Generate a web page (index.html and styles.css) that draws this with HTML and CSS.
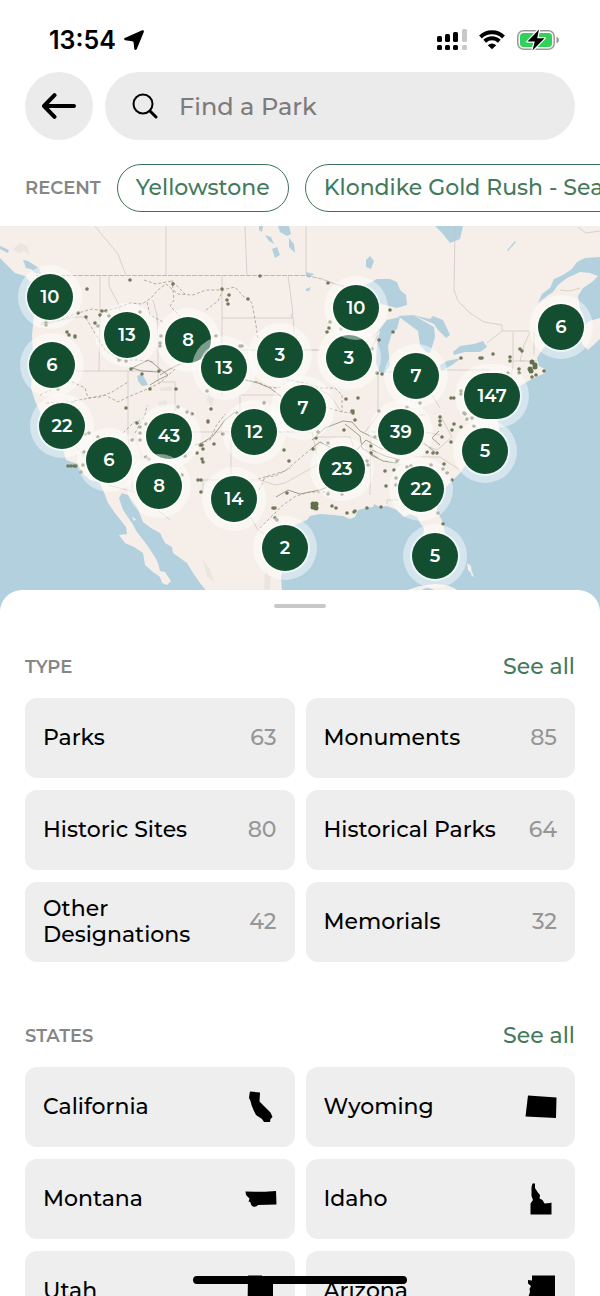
FILE: index.html
```html
<!DOCTYPE html>
<html lang="en">
<head>
<meta charset="utf-8">
<meta name="viewport" content="width=device-width, initial-scale=1">
<title>Find a Park</title>
<link rel="stylesheet" href="styles.css">
</head>
<body>
<div class="screen">
  <div class="status">
    <div class="status-side">
      <span class="time">13:54</span>
      <svg class="location" viewBox="0 0 20 20" width="20" height="20" aria-hidden="true"><path d="M18.200.3Q20.300-.3 19.800 1.900L12.800 19Q11.500 21 10.300 19L9.600 12.600Q9.400 11.400 8.200 11.200L1.200 10.200Q-.8 9 .8 7.900Z"/></svg>
    </div>
    <div class="status-side">
      <svg viewBox="0 0 30 22" width="30" height="22" aria-hidden="true">
        <g><rect x="0" y="7" width="5" height="6" rx="1.5"/><rect x="8" y="5" width="5" height="8" rx="1.5"/><rect x="16" y="3" width="5" height="10" rx="1.5"/><rect x="0" y="16" width="5" height="5" rx="1.5"/><rect x="8" y="16" width="5" height="5" rx="1.5"/><rect x="16" y="16" width="5" height="5" rx="1.5"/></g>
        <g class="signal-off"><rect x="25" y="0" width="5" height="13" rx="1.5"/><rect x="25" y="16" width="5" height="5" rx="1.5"/></g>
      </svg>
      <svg class="wifi" viewBox="0 0 26 20" width="26" height="20" aria-hidden="true">
        <path class="wifi-arc" d="M1.5 7A16.5 16.5 0 0 1 24.500 7M5.700 11.300A10.500 10.500 0 0 1 20.300 11.300"/>
        <path d="M13 19.300 8.800 15.200Q13 11.800 17.200 15.200Z"/>
      </svg>
      <svg viewBox="0 0 42 22" width="42" height="22" aria-hidden="true">
        <rect class="battery-shell" x=".8" y="1.800" width="36.400" height="18.400" rx="5.500"/>
        <rect class="battery-fill" x="3" y="4" width="32" height="14" rx="3.500"/>
        <path class="battery-tip" d="M39.500 7.500Q42 8.500 42 11T39.500 14.500Z"/>
        <path class="bolt" d="M22 .5 10.500 12.600H17.800L15.500 21.500 27.500 9.200H20.200Z"/>
      </svg>
    </div>
  </div>

  <header class="search-row">
    <button class="back" type="button" aria-label="Back">
      <svg viewBox="0 0 34 26" width="34" height="26" aria-hidden="true"><path d="M32 13H2.500M12.500 2.200 2 13 12.500 23.800"/></svg>
    </button>
    <label class="search">
      <svg viewBox="0 0 26 26" width="26" height="26" aria-hidden="true"><circle cx="11" cy="11" r="9.500"/><path class="handle-stroke" d="M18 18 24 24"/></svg>
      <input type="search" placeholder="Find a Park" aria-label="Find a Park">
    </label>
  </header>

  <nav class="recent" aria-label="Recent parks">
    <span class="label">RECENT</span>
    <a class="chip" href="#yellowstone">Yellowstone</a>
    <a class="chip" href="#klondike">Klondike Gold Rush - Seattle Unit</a>
  </nav>

  <main class="map" aria-label="Map of parks">
    <svg class="map-art" viewBox="0 226 600 390" preserveAspectRatio="none" aria-hidden="true">
      <rect class="land" x="0" y="226" width="600" height="390"/>
      <g class="relief">
        <path d="M8 243 13 249 20 243 27 246 30 255 23 251 18 254 12 248ZM160 388 172 386V391H160ZM158 402 166 400 168 405 160 408ZM208 392 214 398 212 407 207 401ZM203 560 210 570 214 582 207 576ZM265 570 271 576 270 590H264Z"/>
      </g>
      <g class="water">
        <path d="M0 258 7 265 15 273 25 276 31 283 37 295 34 316 32 335 33 355 32 375 31 388 35 401 40 412 46 428 54 442 63 450 66 460 78 464 83 474 90 480 99 482 103 490 108 503 115 513 126 527 127 534 119 535 125 543 134 547 143 553 145 565 153 572 160 577 162 583 167 585 171 581 165 572 160 571 158 563 155 557 149 548 147 545 137 532 132 523 123 510 119 498 122 493 128 495 137 507 143 522 151 528 160 533 165 543 172 547 173 553 187 563 193 573 200 583 208 593V616H0Z"/>
        <path d="M280 616 282 590 281 577 285 560 280 548 284 535 295 525 307 520 310 516 320 514 333 515 343 516 350 519 355 517 358 510 366 508 373 507 374 504 380 507 387 506 397 510 404 517 410 514 417 517 420 523 424 528 423 538 427 550 430 563 437 570 446 566 448 552 446 539 443 523 437 510 438 496 443 490 452 481 460 473 468 462 478 455 490 448 501 438 498 423 501 405 512 394 518 387 532 379 545 373 545 369 539 366 537 358 542 350 550 341 565 332 578 324 584 318 580 308 578 296 583 288 592 282 597 277 600 275V616Z"/>
        <path d="M538 303 542 294 550 288 554 279 563 275 572 269 577 262 585 258 600 257V277L590 273 580 272 567 278 558 285 553 292 547 296Z"/>
        <path d="M361 287 370 283 377 279 390 279 397 282 400 290 406 295 407 305 397 308 389 306 381 304 375 308 368 303 365 293ZM375 335 380 328 387 320 400 317 397 329 392 333 388 346 390 365 385 373 379 372 376 362 377 345 380 330ZM398 316 413 315 427 323 434 327 435 337 432 347 430 353 426 352 420 345 418 331ZM413 315 430 319 433 316 443 320 450 335 446 338 438 330 434 324ZM440 365 447 361 461 358 452 365 441 371ZM453 352 460 346 474 344 483 341 487 347 480 352 465 352 454 355ZM435 226H463L460 239 450 243 443 234ZM507 250 515 241 516 242 508 251ZM366 260 370 256 374 261 371 269 366 267ZM278 226H289L291 234 287 236 280 232ZM289 238 294 244 295 253 289 247ZM265 235 271 237 274 244 269 241ZM272 249 277 247 280 255 275 258ZM259 226H263L262 232 259 230ZM306 272 314 274 309 278 306 276ZM306 289 311 287 309 291 306 291ZM0 246 9 250 8 253 0 249ZM23 260 28 261 39 268 41 274 35 273 31 269 26 268ZM137 376 142 374 145 379 148 385 142 386 138 381Z"/>
      </g>
      <g class="land">
        <path d="M581 329 589 321 600 318V339L588 350 582 344ZM403 592Q418 585 434 584 452 584 459 592ZM467 563 471 566 472 574 468 570ZM472 571 474 577 471 575ZM132 517 136 519 134 521Z"/>
      </g>
      <path class="water" d="M422 590Q427 586 434 590Z"/>
      <g class="border">
        <path class="dashed" d="M36 275.500H306L322 279 335 284 350 288 365 285"/>
        <path d="M95 226 102 235 109 243 118 254 122 265 126 275M166 226V275M245 226 247 275M306 226V274M100 276V300L99 371M109 276V286L118 303 122 318M40 325 75 317 87 317M44 371H153M128 371V439L132 455 132 490M153 300 157 315 158 348 158 382H175M175 382V432H290M222 275V397M222 318H292L291 314M222 350H320M288 276 292 305 294 330 294 350H318M240 395V450H241M231 432V480H203V493M241 395H280L285 402M241 432H312L317 455M278 377 310 385 330 395 340 410M316 437H350L353 445 350 470M371 437 370 495M378 373V415L365 432M388 372H422V395M378 335 370 352 358 360M387 504V500H430M455 226 454 290 458 301 470 313 484 322 502 325V331H530M502 331 487 343M443 370H490M513 332V365L511 379M530 332 524 345 520 361H537M513 361H525M534 332V355M560 290 570 291 580 288M578 227 586 233 600 231M371 432H425L440 435M440 415 452 437 437 450 422 444M415 457H440L460 470M390 415H425M430 392 440 408M250 516 258 530 266 535M241 480H260L275 485 285 483 317 465M75 445 108 485 135 492 170 520"/>
      </g>
      <g class="trail">
        <path d="M42 323 60 320 75 314 92 309 105 311 120 307 130 303 142 304 151 298 158 290 166 284 178 294 193 295 206 290 222 290 235 287 243 296 252 303 256 325 258 340M144 280 156 284 172 281 185 294M147 302 150 315 163 322M172 280 174 300 170 306 180 316M206 310 218 301 223 290M86 318 96 335 105 350 120 360 138 360 155 362M40 395 55 388 70 381 85 388 88 398 100 397 112 392 128 382M74 401 105 395 118 402 128 397 145 390 160 383 175 369M46 403 76 402M135 433 145 415 147 405M123 433 133 423 140 420M195 445 210 440 216 426 225 414M258 479 285 471 311 449M260 528 272 516 283 505 296 496 310 492 330 492 345 480M259 490 265 477 275 476 290 468M240 379 258 382 268 387 278 388 290 380 305 383 320 388 335 388 342 395 342 412M325 407 342 412 353 413"/>
      </g>
      <g class="trail solid">
        <path d="M131 369 138 365 148 360 153 363 160 369 168 375 158 380 150 385M159 372 142 371 132 368M160 375 168 370 178 365 190 360M202 443 213 436 225 420 235 412M245 380 258 383 270 388 283 398M312 440 325 428 343 421 352 422 360 431 376 439 390 444M312 448 320 442 335 450 355 452 366 440 380 448 400 456M345 424 360 436 362 448 378 458M372 450 385 456 400 460M420 440 435 452M371 455 383 461 397 463M440 445 432 438 439 431M276 497 288 490 300 494 320 490 340 482"/>
      </g>
      <path class="dots" d="M87 289h0M130 280h0M173 284h0M78 313h0M86 317h0M102 311h0M106 311h0M100 315h0M109 316h0M95 323h0M98 326h0M46 322h0M46 325h0M67 332h0M69 335h0M75 336h0M140 312h0M161 336h0M160 343h0M160 346h0M119 360h0M126 361h0M131 369h0M159 371h0M142 374h0M150 389h0M176 389h0M126 408h0M58 389h0M178 407h0M187 412h0M192 414h0M222 289h0M229 295h0M227 300h0M228 304h0M248 299h0M260 276h0M216 336h0M240 346h0M242 346h0M328 283h0M330 322h0M329 328h0M327 332h0M341 329h0M390 310h0M393 332h0M372 349h0M379 340h0M377 373h0M382 374h0M346 399h0M358 398h0M353 413h0M379 411h0M264 403h0M211 409h0M237 413h0M207 391h0M461 358h0M480 358h0M482 358h0M493 354h0M520 349h0M522 351h0M510 357h0M510 361h0M508 373h0M519 369h0M519 373h0M544 371h0M536 375h0M532 377h0M451 398h0M454 398h0M420 403h0M407 407h0M461 391h0M461 394h0M465 414h0M137 423h0M140 427h0M146 424h0M132 440h0M140 440h0M140 433h0M85 434h0M89 433h0M98 437h0M84 452h0M83 465h0M81 472h0M68 466h0M71 466h0M74 466h0M76 466h0M146 457h0M149 459h0M185 456h0M182 475h0M197 453h0M200 445h0M198 480h0M201 492h0M203 449h0M208 422h0M223 434h0M214 444h0M202 459h0M201 480h0M208 421h0M284 450h0M289 461h0M287 493h0M273 508h0M275 508h0M275 518h0M277 520h0M313 449h0M316 438h0M318 432h0M344 430h0M328 443h0M352 411h0M355 420h0M367 461h0M368 465h0M371 446h0M371 453h0M385 471h0M394 470h0M386 486h0M396 478h0M396 485h0M375 437h0M328 494h0M342 494h0M332 506h0M336 508h0M347 513h0M354 512h0M367 508h0M381 507h0M397 461h0M427 452h0M433 453h0M437 453h0M440 417h0M440 421h0M440 425h0M454 424h0M461 427h0M452 430h0M442 437h0M451 442h0M431 465h0M444 464h0M443 469h0M447 473h0M452 480h0M438 513h0M443 524h0M407 467h0M411 466h0M464 413h0M467 419h0M472 418h0M474 426h0M75 337h0M202 445h0M203 462h0M355 511h0M353 411h0"/>
      <path class="dots cluster" d="M313 504h0M316 504h0M313 507h0M316 508h0M532 362h0M535 365h0M530 369h0M535 367h0M531 371h0"/>
    </svg>

    <button class="pin" style="--x:50;--y:71">10</button>
    <button class="pin" style="--x:127;--y:109">13</button>
    <button class="pin" style="--x:188;--y:114">8</button>
    <button class="pin" style="--x:224;--y:142">13</button>
    <button class="pin" style="--x:280;--y:129">3</button>
    <button class="pin" style="--x:349;--y:132">3</button>
    <button class="pin" style="--x:356;--y:82">10</button>
    <button class="pin" style="--x:561;--y:101">6</button>
    <button class="pin" style="--x:52;--y:139">6</button>
    <button class="pin" style="--x:416;--y:150">7</button>
    <button class="pin" style="--x:303;--y:182">7</button>
    <button class="pin" style="--x:62;--y:200">22</button>
    <button class="pin" style="--x:169;--y:210">43</button>
    <button class="pin" style="--x:254;--y:206">12</button>
    <button class="pin" style="--x:401;--y:206">39</button>
    <button class="pin" style="--x:109;--y:234">6</button>
    <button class="pin" style="--x:485;--y:225">5</button>
    <button class="pin wide" style="--x:492;--y:170">147</button>
    <button class="pin" style="--x:159;--y:260">8</button>
    <button class="pin" style="--x:342;--y:243">23</button>
    <button class="pin" style="--x:234;--y:273">14</button>
    <button class="pin" style="--x:421;--y:263">22</button>
    <button class="pin" style="--x:285;--y:322">2</button>
    <button class="pin" style="--x:435;--y:330">5</button>
  </main>

  <div class="sheet">
    <div class="grabber"></div>
    <section class="group">
      <div class="group-head"><h2 class="label">TYPE</h2><a class="see-all" href="#types">See all</a></div>
      <div class="cards">
        <button class="card"><span>Parks</span><span class="count">63</span></button>
        <button class="card"><span>Monuments</span><span class="count">85</span></button>
        <button class="card"><span>Historic Sites</span><span class="count">80</span></button>
        <button class="card"><span>Historical Parks</span><span class="count">64</span></button>
        <button class="card"><span>Other Designations</span><span class="count">42</span></button>
        <button class="card"><span>Memorials</span><span class="count">32</span></button>
      </div>
    </section>
    <section class="group">
      <div class="group-head"><h2 class="label">STATES</h2><a class="see-all" href="#states">See all</a></div>
      <div class="cards">
        <button class="card"><span>California</span><svg class="state" viewBox="0 0 32 32" aria-hidden="true"><path d="M5 .5 15 1.500 14.500 10.500 25.500 21.500 27.500 26 25.500 28 25 31H19L17 28 11 24 8.500 19 6.500 14 5.500 10 4 7 4.500 3Z"/></svg></button>
        <button class="card"><span>Wyoming</span><svg class="state" viewBox="0 0 32 32" aria-hidden="true"><path d="M3 4.500 31.500 6.500 31 27 .5 25.500Z"/></svg></button>
        <button class="card"><span>Montana</span><svg class="state" viewBox="0 0 32 32" aria-hidden="true"><path d="M.5 8.500 20 8.800 31 8 31.500 21.500 13 22 12 23 9 24 6.500 22.500 5 18.500 3.500 19 4.500 15.500 1 12Z"/></svg></button>
        <button class="card"><span>Idaho</span><svg class="state" viewBox="0 0 32 32" aria-hidden="true"><path d="M7.500 .5H10V5L12.500 9 15 12 14.500 15.500 17.500 17 19.500 20.500 25 20 26.500 19.500V31.500H5.500V20.500L8 17 6.500 13V4Z"/></svg></button>
        <button class="card"><span>Utah</span><svg class="state" viewBox="0 0 32 32" aria-hidden="true"><path d="M3 .5H17V6.500H28V31.500H2.500Z"/></svg></button>
        <button class="card"><span>Arizona</span><svg class="state" viewBox="0 0 32 32" aria-hidden="true"><path d="M7 .5H30V31.500H19L3 23 5 17 4.500 14 6 11 3 8.500V5L7 5.500Z"/></svg></button>
      </div>
    </section>
  </div>
  <div class="home-bar"></div>
</div>
</body>
</html>
```
FILE: styles.css
```css
* { box-sizing: border-box; }

body {
  margin: 0;
  background: #fff;
  color: #000;
  font-family: Montserrat, Inter, "Liberation Sans", sans-serif;
  font-weight: 500;
}

button, input { font: inherit; color: inherit; border: 0; }
button { cursor: pointer; }
a { text-decoration: none; }

.screen {
  height: 100vh;
  display: flex;
  flex-direction: column;
  overflow: hidden;
}

/* Status bar */
.status {
  flex: none;
  height: 72px;
  padding: 8px 41px 0 49px;
  display: flex;
  align-items: center;
  justify-content: space-between;
}
.status-side { display: flex; align-items: center; gap: 8px; }
.status-side svg { display: block; }
.time { font-family: Inter, sans-serif; font-size: 25px; font-weight: 600; line-height: 32px; }
.signal-off { fill: #c8c8c8; }
.wifi { margin: 0 4px; }
.wifi-arc { fill: none; stroke: #000; stroke-width: 4; }
.battery-shell { fill: none; stroke: #999; stroke-width: 1.5; }
.battery-fill { fill: #34d15a; }
.battery-tip { fill: #999; }
.bolt { stroke: #fff; stroke-width: 2.5; paint-order: stroke; stroke-linejoin: round; }

/* Search */
.search-row { flex: none; display: flex; gap: 12px; padding: 0 25px; }
.back {
  flex: none;
  width: 68px;
  height: 68px;
  padding: 0;
  border-radius: 50%;
  background: #ebebeb;
  display: grid;
  place-items: center;
}
.back svg, .search svg { fill: none; stroke: #000; stroke-linecap: round; stroke-linejoin: round; }
.back svg { stroke-width: 4; }
.search {
  flex: 1;
  display: flex;
  align-items: center;
  gap: 21px;
  padding: 0 27px;
  height: 68px;
  border-radius: 34px;
  background: #ebebeb;
}
.search svg { flex: none; stroke-width: 2; }
.search .handle-stroke { stroke-width: 3; }
.search input {
  flex: 1;
  min-width: 0;
  padding: 0;
  background: none;
  outline: 0;
  font-size: 24px;
}
.search input::placeholder { color: #7c7c7c; opacity: 1; }

/* Recent */
.recent {
  flex: none;
  display: flex;
  align-items: center;
  gap: 16px;
  padding: 24px 0 14px 25px;
  overflow-x: auto;
  scrollbar-width: none;
}
.label { margin: 0; font-size: 18px; line-height: 30px; font-weight: 600; color: #868686; }
.chip {
  flex: none;
  height: 48px;
  padding: 0 18px;
  border: 1px solid #3d7457;
  border-radius: 24px;
  color: #447a5c;
  font-size: 22px;
  line-height: 46px;
  white-space: nowrap;
}

/* Map */
.map { flex: none; position: relative; height: 390px; overflow: hidden; }
.map-art { display: block; width: 100%; height: 100%; }
.land { fill: #f6eee8; }
.relief { fill: #ebe5e0; }
.water { fill: #b3d0df; }
.border { fill: none; stroke: #c9c4c1; stroke-width: .7; }
.border .dashed { stroke: #a8a4a2; stroke-dasharray: 5 1; }
.trail { fill: none; stroke: #a09d93; stroke-width: .8; stroke-dasharray: 3 2; stroke-linejoin: round; }
.trail.solid { stroke: #868b78; stroke-dasharray: none; }
.dots { fill: none; stroke: #6f7a5b; stroke-width: 3.6; stroke-linecap: round; }
.dots.cluster { stroke: #60704b; stroke-width: 5; }
.pin {
  position: absolute;
  left: calc(var(--x) / 600 * 100%);
  top: calc(var(--y) * 1px);
  min-width: 46px;
  height: 46px;
  padding: 0;
  transform: translate(-50%, -50%);
  border-radius: 23px;
  background: #124e2f;
  box-shadow: 0 0 0 2px rgba(255, 255, 255, .6), 0 0 0 9px rgba(255, 255, 255, .45);
  color: #fff;
  font-size: 18px;
  font-weight: 600;
  line-height: 46px;
}
.pin.wide { min-width: 56px; }

/* Bottom sheet */
.sheet {
  flex: 1;
  min-height: 0;
  position: relative;
  margin-top: -26px;
  padding: 14px 25px 0;
  border-radius: 22px 22px 0 0;
  background: #fff;
  overflow-y: auto;
  scrollbar-width: none;
}
.grabber { width: 52px; height: 4px; margin: 0 auto 44px; border-radius: 2px; background: #c8c8c8; }
.group { margin-bottom: 59px; }
.group-head { display: flex; justify-content: space-between; align-items: center; margin-bottom: 16px; }
.see-all { color: #447a5c; font-size: 22px; line-height: 30px; }
.cards { display: grid; grid-template-columns: 1fr 1fr; gap: 12px 11px; }
.card {
  height: 80px;
  padding: 0 18px;
  border-radius: 12px;
  background: #eee;
  display: flex;
  align-items: center;
  justify-content: space-between;
  gap: 20px;
  font-size: 22px;
  line-height: 26px;
  text-align: left;
}
.count { color: #969696; }
.state { flex: none; width: 32px; height: 32px; }

.home-bar {
  position: fixed;
  bottom: 12px;
  left: 50%;
  width: 214px;
  height: 8px;
  margin-left: -107px;
  border-radius: 4px;
  background: #000;
}
```
